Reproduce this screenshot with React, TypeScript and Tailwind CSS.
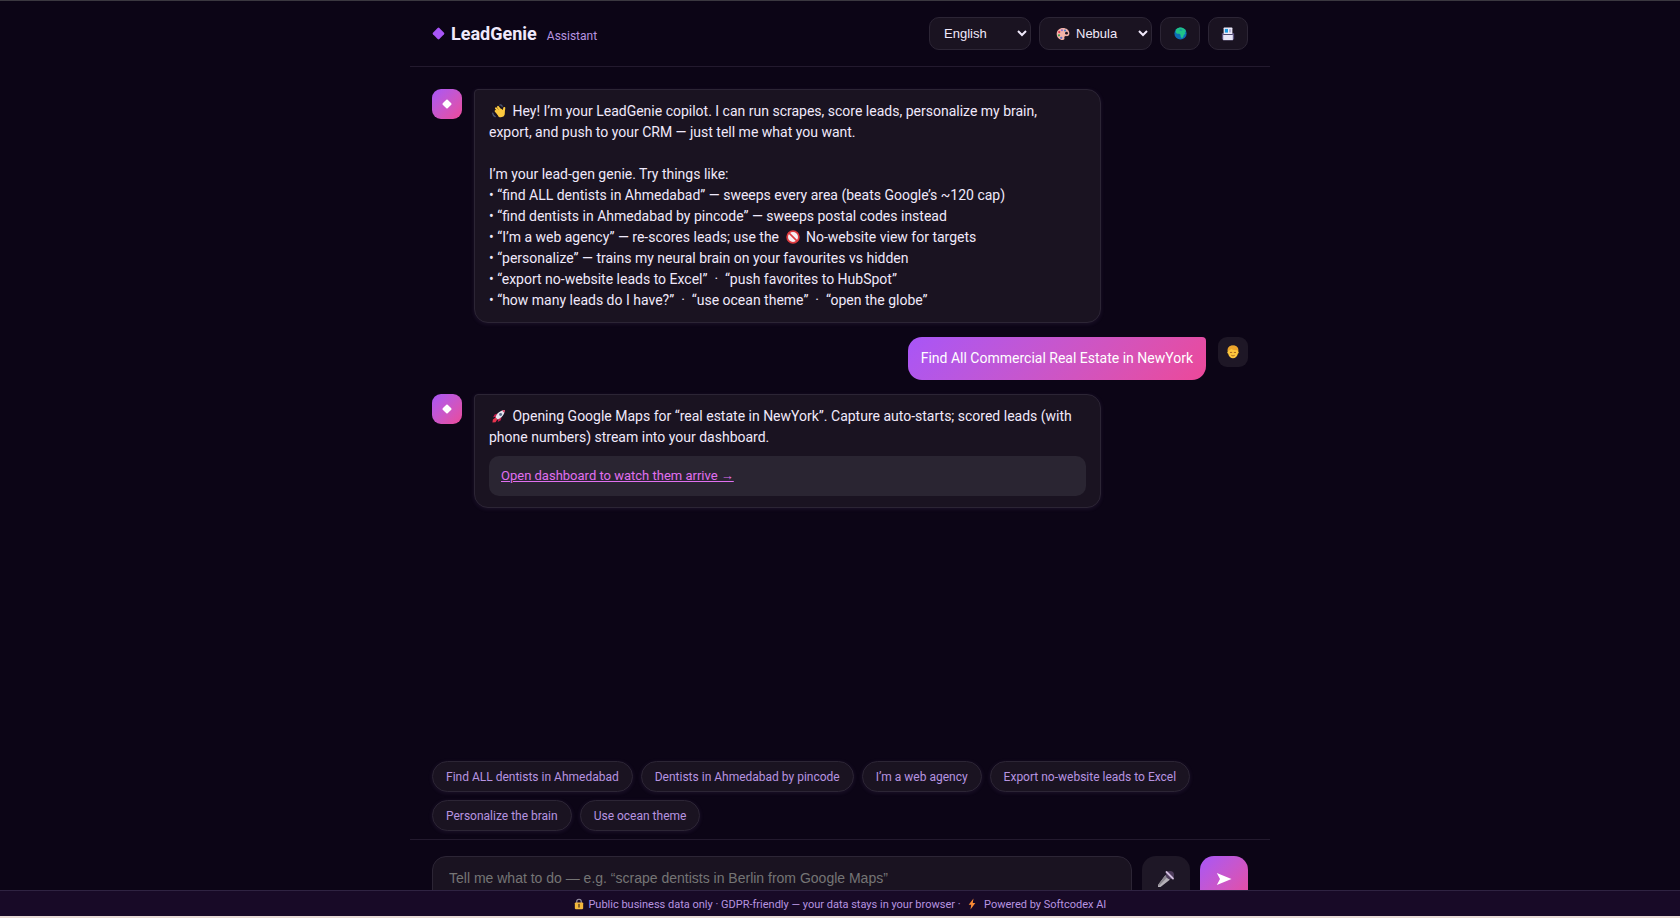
import { useState } from 'react'
import type { ReactNode } from 'react'
import clsx from 'clsx'

interface IconProps {
  className?: string
}

const inlineIcon = 'mx-[3px] inline-block size-3.5 align-[-2px]'

function WaveIcon({ className }: IconProps) {
  return (
    <svg viewBox="0 0 16 16" className={className} aria-hidden="true">
      <path d="M9 1.2c1.200-.4 2.200.2 2.600 1.400M.8 10.500c.2 1.800 1.200 3.200 2.800 4" stroke="#4a5572" strokeWidth="1.500" fill="none" strokeLinecap="round" />
      <path d="M4.200 8l3.500 4M4.600 5l4.400 5M6.800 3.400l4 5.200M14 4.600l-.6 4.400" stroke="#fcc93f" strokeWidth="2.400" strokeLinecap="round" />
      <path d="M5 8.500l5-3.500 3.500 2.500c1.300 1.500 1.700 4.200.3 6-1.500 1.900-4.600 2.200-6.500.7z" fill="#fcc93f" />
    </svg>
  )
}

function PaletteIcon({ className }: IconProps) {
  return (
    <svg viewBox="0 0 16 16" className={className} aria-hidden="true">
      <path d="M8 1.200C3.800 1.200.8 4 .8 7.900c0 4 3.200 6.900 6.800 6.900 1.600 0 2.300-.9 2-2.200-.3-1.500.5-2.400 2-2.200 2.200.3 3.700-.8 3.700-3C15.300 3.700 12 1.200 8 1.200z" fill="#f4b3a8" />
      <circle cx="12" cy="7" r="1.600" fill="#1b1422" />
      <circle cx="3.400" cy="9.500" r="1.300" fill="#3fa24b" />
      <circle cx="3.700" cy="5.800" r="1.300" fill="#e0384f" />
      <circle cx="6.800" cy="3.700" r="1.200" fill="#8b6ccf" />
      <circle cx="10.300" cy="3.900" r="1.100" fill="#3c82d8" />
      <circle cx="6" cy="12.300" r="1.300" fill="#5c6bc0" />
    </svg>
  )
}

function GlobeIcon({ className }: IconProps) {
  return (
    <svg viewBox="0 0 16 16" className={className} aria-hidden="true">
      <circle cx="8" cy="8" r="7.500" fill="#0e6cb5" />
      <path d="M2.500 3C5 .3 9.500 0 12 1.700c1.300.8 2.400 2.200 2.900 3.700l-1.700.6 1 1.800-2.200 2.200-.6 2-1.700 2-1.700-2.500.1-2-1.600-1.300-2.800.2L2 6.500z" fill="#1fc287" />
      <path d="M6 3.600l2.200-.6 2.500.8-2 .6z" fill="#0e6cb5" />
    </svg>
  )
}

function FloppyIcon({ className }: IconProps) {
  return (
    <svg viewBox="0 0 16 16" className={className} aria-hidden="true">
      <path d="M1 7h14v6.500l-1.500 1.500h-11L1 13.500z" fill="#5e5480" />
      <rect x="3" y=".5" width="10" height="8" rx=".8" fill="#eceafa" />
      <rect x="4.400" y="2.200" width="3.600" height="4.200" fill="#1a9be0" />
      <rect x="9.200" y="2.400" width="2.400" height="3.800" fill="#b9b3d2" />
      <path d="M2.500 9h11v6h-11z" fill="#e8e6f8" />
      <path d="M3 8h10v1H3z" fill="#41395f" />
    </svg>
  )
}

function NoEntryIcon({ className }: IconProps) {
  return (
    <svg viewBox="0 0 16 16" className={className} aria-hidden="true">
      <circle cx="8" cy="8" r="6.700" fill="#f6eef2" stroke="#dd3a3f" strokeWidth="2" />
      <path d="M3.600 3.600l8.800 8.800" stroke="#dd3a3f" strokeWidth="1.800" />
    </svg>
  )
}

function RocketIcon({ className }: IconProps) {
  return (
    <svg viewBox="0 0 16 16" className={className} aria-hidden="true">
      <path d="M6.500 5L3 6.200 1.200 9.500l4-.7zM11 9.500L9.800 13l-3.300 1.800.7-4z" fill="#c81e50" />
      <path d="M4.500 9.500L1 12l-.5 3.500L4 15l2.500-3.500z" fill="#e8344e" />
      <path d="M4 9.500C5.500 5 9.500 1.600 14.500 1.200 14.700 6 11 10.500 6.500 12z" fill="#e6e4ef" />
      <path d="M11.500 1.800c1-.4 2-.6 3-.6.1 1.100-.1 2.200-.5 3.200z" fill="#e0325a" />
      <circle cx="9.800" cy="6.200" r="1.700" fill="#5a6f8c" />
    </svg>
  )
}

function FaceIcon({ className }: IconProps) {
  return (
    <svg viewBox="0 0 16 16" className={className} aria-hidden="true">
      <path d="M2.200 7C2 3 4.500.8 8 .8s6 2.200 5.800 6.200c1 .2 1 2.400-.2 2.700-.6 3.200-3 5.500-5.600 5.500s-5-2.300-5.600-5.500C1.200 9.400 1.200 7.200 2.200 7z" fill="#fdc63c" />
      <path d="M1.900 7.200C1.200 2.800 4 .5 8 .5s6.800 2.300 6.100 6.700L12.600 6C10 6 7.500 5.500 6 4.200 5 5.500 3.800 6 3.200 6.200z" fill="#eda52c" />
      <path d="M5 8.500h1.600M9.400 8.500H11M6.500 12c1 .6 2 .6 3 0" stroke="#9c5a1e" strokeWidth="1" fill="none" strokeLinecap="round" />
    </svg>
  )
}

function MicIcon({ className }: IconProps) {
  return (
    <svg viewBox="0 0 18 18" className={className} aria-hidden="true">
      <path d="M8.300 5.200l4.500 4.500L3.500 17 1 17l0-2z" fill="#b5b1b8" />
      <path d="M8.300 5.200l2 2L2 16 1 15z" fill="#8a868e" />
      <circle cx="13" cy="5" r="4" fill="#4e3d5c" />
      <path d="M9.500 2l6.500 6.500" stroke="#d3bfe0" strokeWidth="1.800" strokeLinecap="round" />
    </svg>
  )
}

function SendIcon({ className }: IconProps) {
  return (
    <svg viewBox="0 0 16 14" className={className} aria-hidden="true">
      <path d="M.8 1L15.500 7 .8 13 4 7z" fill="#fff" />
    </svg>
  )
}

function LockIcon({ className }: IconProps) {
  return (
    <svg viewBox="0 0 12 14" className={className} aria-hidden="true">
      <path d="M3.300 6V4a2.700 2.700 0 0 1 5.400 0v2" stroke="#9a93a6" strokeWidth="1.400" fill="none" />
      <rect x="1" y="5.200" width="10" height="8" rx="1" fill="#f3b83c" />
      <path d="M6 7.500v3.200" stroke="#54381b" strokeWidth="1.600" strokeLinecap="round" />
    </svg>
  )
}

function BoltIcon({ className }: IconProps) {
  return (
    <svg viewBox="0 0 12 14" className={className} aria-hidden="true">
      <path d="M7.800.3L2 7.800h3L4.200 13.700l5.800-8H6.900z" fill="#f98b35" />
    </svg>
  )
}

function DiamondIcon({ className }: IconProps) {
  return (
    <svg viewBox="0 0 12 12" className={className} aria-hidden="true">
      <path d="M5.200.9q.8-.7 1.600 0l4.300 4.300q.7.8 0 1.600l-4.300 4.300q-.8.7-1.600 0L.9 6.800q-.7-.8 0-1.600z" fill="currentColor" />
    </svg>
  )
}

function BotMessage({ children }: { children: ReactNode }) {
  return (
    <div className="flex items-start gap-3">
      <div className="flex size-[30px] shrink-0 items-center justify-center rounded-[9px] bg-linear-135 from-[#a855f7] to-[#ec4899] text-white">
        <DiamondIcon className="size-2.5" />
      </div>
      <div className="w-full max-w-[627px] rounded-[14px] rounded-tl-[4px] border border-[#2c2535] bg-[#1a1321] px-3.5 py-[11px] text-[#f0e9fb] shadow-[0_1px_4px_rgba(150,120,190,0.12)]">
        {children}
      </div>
    </div>
  )
}

function UserMessage({ children }: { children: ReactNode }) {
  return (
    <div className="flex items-start justify-end gap-3">
      <div className="rounded-[14px] rounded-tr-[4px] bg-linear-135 from-[#a855f7] to-[#ec4899] px-[13px] py-[11px] text-white">
        {children}
      </div>
      <div className="flex size-[30px] shrink-0 items-center justify-center rounded-[9px] bg-[#1e1726]">
        <FaceIcon className="size-3.5" />
      </div>
    </div>
  )
}

const tips: ReactNode[] = [
  '“find ALL dentists in Ahmedabad” — sweeps every area (beats Google’s ~120 cap)',
  '“find dentists in Ahmedabad by pincode” — sweeps postal codes instead',
  <>
    “I’m a web agency” — re-scores leads; use the <NoEntryIcon className={inlineIcon} /> No-website view for targets
  </>,
  '“personalize” — trains my neural brain on your favourites vs hidden',
  '“export no-website leads to Excel”  ·  “push favorites to HubSpot”',
  '“how many leads do I have?”  ·  “use ocean theme”  ·  “open the globe”'
]

const suggestions = [
  'Find ALL dentists in Ahmedabad',
  'Dentists in Ahmedabad by pincode',
  'I’m a web agency',
  'Export no-website leads to Excel',
  'Personalize the brain',
  'Use ocean theme'
]

const control = 'h-[33px] rounded-[10px] border border-[#2c2535] bg-[#1a1321]'

export default function App() {
  const [language, setLanguage] = useState('English')
  const [theme, setTheme] = useState('Nebula')
  const [message, setMessage] = useState('')

  return (
    <div className="h-screen overflow-hidden border-t border-[#3b3840] bg-[#0c0516] font-['Roboto',sans-serif] text-sm leading-[21px] text-[#f0e9fb]">
      <div className="mx-auto flex h-full max-w-[860px] flex-col">
        {/* Header */}
        <header className="flex items-center justify-between border-b border-[#231a2e] px-[22px] py-4">
          <div className="flex items-center">
            <DiamondIcon className="mr-1.5 size-[13px] text-[#a855f7]" />
            <h1 className="flex items-baseline text-lg leading-6 font-bold">
              LeadGenie
              <span className="ml-2.5 text-xs font-normal text-[#b794e0]">Assistant</span>
            </h1>
          </div>
          <div className="flex items-center gap-2 font-['Liberation_Sans',Arial,sans-serif] text-[13px]">
            <select
              aria-label="Language"
              value={language}
              onChange={(e) => setLanguage(e.target.value)}
              className={clsx(control, 'w-[102px] pl-2.5')}
            >
              <option>English</option>
              <option>Deutsch</option>
              <option>Español</option>
            </select>
            <div className="relative">
              <select
                aria-label="Theme"
                value={theme}
                onChange={(e) => setTheme(e.target.value)}
                className={clsx(control, 'w-[113px] pl-8')}
              >
                <option>Nebula</option>
                <option>Ocean</option>
              </select>
              <PaletteIcon className="pointer-events-none absolute top-2.5 left-[17px] size-3.5" />
            </div>
            <button aria-label="Open globe" className={clsx(control, 'flex w-10 items-center justify-center')}>
              <GlobeIcon className="size-[13px]" />
            </button>
            <button aria-label="Save chat" className={clsx(control, 'flex w-10 items-center justify-center')}>
              <FloppyIcon className="size-3.5" />
            </button>
          </div>
        </header>

        {/* Conversation */}
        <main className="flex min-h-0 flex-1 flex-col gap-3.5 overflow-hidden px-[22px] pt-[22px]">
          <BotMessage>
            <p>
              <WaveIcon className={inlineIcon} /> Hey! I’m your LeadGenie copilot. I can run scrapes, score leads,
              personalize my brain,
              <br />
              export, and push to your CRM — just tell me what you want.
            </p>
            <p className="mt-[21px]">I’m your lead-gen genie. Try things like:</p>
            <ul>
              {tips.map((tip, i) => (
                <li key={i} className="whitespace-pre-wrap">
                  • {tip}
                </li>
              ))}
            </ul>
          </BotMessage>
          <UserMessage>Find All Commercial Real Estate in NewYork</UserMessage>
          <BotMessage>
            <p>
              <RocketIcon className={inlineIcon} /> Opening Google Maps for “real estate in NewYork”. Capture
              auto-starts; scored leads (with phone numbers) stream into your dashboard.
            </p>
            <div className="mt-2 rounded-[10px] bg-[#2a2532] px-3 py-2.5 text-[13px] leading-5">
              <a href="#dashboard" className="text-[#e070f0] underline">
                Open dashboard to watch them arrive →
              </a>
            </div>
          </BotMessage>
        </main>

        {/* Suggestions */}
        <div className="flex flex-wrap gap-2 px-[22px] pb-2">
          {suggestions.map((text) => (
            <button
              key={text}
              onClick={() => setMessage(text)}
              className="h-[31px] rounded-full border border-[#2c2535] bg-[#1a1321] px-[13px] text-xs text-[#b794e0] shadow-[0_1px_4px_rgba(150,120,190,0.12)]"
            >
              {text}
            </button>
          ))}
        </div>

        {/* Composer, its lower edge sits under the footer */}
        <form className="flex gap-2.5 border-t border-[#231a2e] px-[22px] pt-4 pb-3.5" onSubmit={(e) => e.preventDefault()}>
          <input
            aria-label="Message"
            value={message}
            onChange={(e) => setMessage(e.target.value)}
            placeholder="Tell me what to do — e.g. “scrape dentists in Berlin from Google Maps”"
            className="h-12 min-w-0 flex-1 rounded-[14px] border border-[#2c2535] bg-[#1a1321] px-4 pb-1 font-['Liberation_Sans',Arial,sans-serif] placeholder:text-[#757575]"
          />
          <button type="button" aria-label="Speak" className="flex size-12 items-center justify-center rounded-[14px] bg-[#1e1726] pb-0.5">
            <MicIcon className="size-[18px]" />
          </button>
          <button
            type="submit"
            aria-label="Send"
            className="flex size-12 items-center justify-center rounded-[14px] bg-linear-135 from-[#a855f7] to-[#ec4899] pb-0.5"
          >
            <SendIcon className="h-3.5 w-4" />
          </button>
        </form>
      </div>

      <footer className="fixed inset-x-0 bottom-0 border-t border-b-2 border-t-[#2f2342] border-b-[#e8dcd6] bg-[#180a27] pt-[5px] pb-[3px] text-center text-[11px] leading-[17px] text-[#b794e0]">
        <LockIcon className="mr-0.5 inline-block h-3 w-2.5 align-[-2px]" /> Public business data only · GDPR-friendly —
        your data stays in your browser · <BoltIcon className="mx-1 inline-block h-3 w-2.5 align-[-2px]" /> Powered by
        Softcodex AI
      </footer>
    </div>
  )
}
